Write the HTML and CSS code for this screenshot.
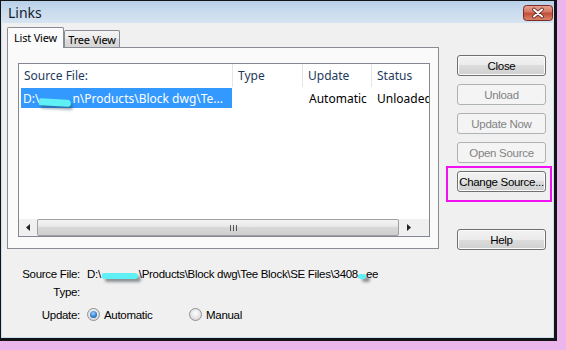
FILE: index.html
```
<!DOCTYPE html>
<html>
<head>
<meta charset="utf-8">
<title>Links</title>
<link rel="stylesheet" href="styles.css">
</head>
<body>
<div class="screen">
  <div class="window">
    <div class="titlebar">
      <span class="title">Links</span>
      <span class="close-x">
        <svg width="30" height="16" viewBox="0 0 30 16">
          <defs>
            <linearGradient id="rg" x1="0" y1="0" x2="0" y2="1">
              <stop offset="0" stop-color="#e8a595"/>
              <stop offset="0.45" stop-color="#d47462"/>
              <stop offset="0.5" stop-color="#c24a36"/>
              <stop offset="1" stop-color="#d98a6e"/>
            </linearGradient>
          </defs>
          <rect x="0.5" y="0.5" width="29" height="15" rx="3" fill="url(#rg)" stroke="#7a2a22"/>
          <path d="M11 4.5 L19 11.5 M19 4.5 L11 11.5" stroke="#5a2018" stroke-width="3.6" stroke-linecap="round"/>
          <path d="M11 4.5 L19 11.5 M19 4.5 L11 11.5" stroke="#ffffff" stroke-width="2" stroke-linecap="round"/>
        </svg>
      </span>
    </div>
    <div class="client">
      <div class="main">
        <div class="left">
          <div class="tabs">
            <div class="tab active">List View</div>
            <div class="tab">Tree View</div>
          </div>
          <div class="panel">
            <div class="listbox">
              <div class="lv-header">
                <div class="col c1">Source File:</div>
                <div class="col c2">Type</div>
                <div class="col c3">Update</div>
                <div class="col c4">Status</div>
              </div>
              <div class="lv-body">
                <div class="row">
                  <div class="cell c1"><span class="sel">D:\<span class="blot"></span>n\Products\Block dwg\Te...</span></div>
                  <div class="cell c2"></div>
                  <div class="cell c3">Automatic</div>
                  <div class="cell c4">Unloaded</div>
                </div>
              </div>
              <div class="hscroll">
                <div class="arrow">
                  <svg width="4" height="7" viewBox="0 0 4 7"><path d="M4 0 L0 3.5 L4 7 Z" fill="#222"/></svg>
                </div>
                <div class="thumb">
                  <svg width="7" height="6" viewBox="0 0 7 6"><path d="M0.5 0 V6 M3.5 0 V6 M6.5 0 V6" stroke="#555" stroke-width="1"/></svg>
                </div>
                <div class="arrow right">
                  <svg width="4" height="7" viewBox="0 0 4 7"><path d="M0 0 L4 3.5 L0 7 Z" fill="#222"/></svg>
                </div>
              </div>
            </div>
          </div>
        </div>
        <div class="buttons">
          <div class="btn">Close</div>
          <div class="btn disabled">Unload</div>
          <div class="btn disabled">Update Now</div>
          <div class="btn disabled">Open Source</div>
          <div class="btn">Change Source...</div>
          <div class="btn help">Help</div>
        </div>
      </div>
      <div class="props">
        <div class="label">Source File:</div>
        <div class="value">D:\<span class="blot2"></span>\Products\Block dwg\Tee Block\SE Files\3408<span class="blot3"></span>ee</div>
        <div class="label">Type:</div>
        <div class="value"></div>
        <div class="label upd">Update:</div>
        <div class="value upd radios">
          <span class="radio-item auto"><span class="radio checked"></span>Automatic</span>
          <span class="radio-item"><span class="radio"></span>Manual</span>
        </div>
      </div>
    </div>
  </div>
  <div class="highlight"></div>
</div>
</body>
</html>
```
FILE: styles.css
```
* { box-sizing: border-box; }
html, body { margin: 0; padding: 0; }
body { background: #ebb6ec; }

.screen {
  position: relative;
  width: 566px;
  height: 350px;
  background: #ebb6ec;
  overflow: hidden;
}

.window {
  width: 557px;
  height: 341px;
  border-style: solid;
  border-color: #121418;
  border-width: 1px 3px 3px 1px;
  background: #cfdeee;
  display: flex;
  flex-direction: column;
}

.titlebar {
  height: 22px;
  flex: none;
  display: flex;
  align-items: center;
  justify-content: space-between;
  padding: 0 1px 0 7px;
  background: linear-gradient(#b8cfe8, #c9dbee 45%, #d6e3f1);
}
.title {
  font: 14px "Noto Sans", "Open Sans", sans-serif;
  color: #14202e;
  margin-top: 1px;
}
.close-x { display: flex; margin-top: 2px; }

.client {
  flex: 1;
  margin: 0 1px 1px 1px;
  background: #f0f0f0;
  display: flex;
  flex-direction: column;
}

.main {
  display: flex;
  padding: 4px 0 0 5px;
}
.left { width: 432px; display: flex; flex-direction: column; }

.tabs {
  display: flex;
  align-items: flex-end;
  height: 20px;
  position: relative;
  z-index: 1;
}
.tab {
  height: 17px;
  width: 56px;
  border: 1px solid #898c95;
  border-bottom: none;
  border-radius: 2px 2px 0 0;
  background: linear-gradient(#f3f3f3, #ebebeb 50%, #dddddd 50%, #d5d5d5);
  font: 11px "Noto Sans", "Open Sans", sans-serif;
  letter-spacing: -0.2px;
  color: #000;
  display: flex;
  align-items: center;
  justify-content: center;
  padding-top: 1px;
}
.tab.active {
  height: 21px;
  width: 57px;
  margin-bottom: -1px;
  background: #fbfbfb;
  padding-bottom: 2px;
}

.panel {
  height: 202px;
  border: 1px solid #898c95;
  background: #fafafa;
  padding: 15px 0 0 10px;
}

.listbox {
  width: 412px;
  height: 174px;
  border: 1px solid #828790;
  background: #fff;
  display: flex;
  flex-direction: column;
  overflow: hidden;
}

.lv-header {
  height: 23px;
  flex: none;
  display: flex;
  font: 12px "Noto Sans", "Open Sans", sans-serif;
  color: #1e395b;
}
.col {
  padding-left: 5px;
  display: flex;
  align-items: center;
  border-right: 1px solid #e3e5e9;
  flex: none;
  white-space: nowrap;
}
.c1 { width: 214px; }
.c2 { width: 70px; }
.c3 { width: 69px; }
.c4 { width: 70px; border-right: none; }

.lv-body { flex: 1; padding-top: 1px; }
.row {
  display: flex;
  height: 20px;
  font: 12px "Noto Sans", "Open Sans", sans-serif;
  color: #000;
}
.cell {
  flex: none;
  display: flex;
  align-items: center;
  white-space: nowrap;
  overflow: visible;
  padding-left: 5px;
}
.cell.c1 { padding-left: 2px; }
.cell.c2, .cell.c3 { padding-left: 6px; }
.cell.c4 { padding-left: 5px; }
.sel {
  display: flex;
  align-items: center;
  height: 20px;
  width: 211px;
  background: #3399ff;
  color: #fff;
  padding-left: 2px;
}
.blot {
  display: inline-block;
  width: 32px;
  height: 7px;
  margin: 8px 1px 0 0;
  border-radius: 4px 8px 6px 3px;
  background: #5ef0f4;
  box-shadow: 2px 3px 3px rgba(40, 60, 80, 0.45);
  transform: rotate(3deg);
}

.hscroll {
  height: 17px;
  flex: none;
  display: flex;
  background: #ececec;
}
.arrow {
  width: 18px;
  display: flex;
  align-items: center;
  justify-content: center;
  background: #f0f0f0;
}
.arrow.right { width: 30px; justify-content: center; padding-right: 10px; }
.thumb {
  flex: 1;
  border: 1px solid #a0a0a0;
  border-radius: 2px;
  background: linear-gradient(#f4f4f4, #e6e6e6 50%, #d8d8d8 50%, #cfcfcf);
  display: flex;
  align-items: center;
  justify-content: center;
  padding-left: 30px;
  margin: 0;
}

.buttons {
  margin: 28px 0 0 18px;
  display: flex;
  flex-direction: column;
  gap: 8px;
}
.btn {
  width: 89px;
  height: 21px;
  border: 1px solid #707070;
  border-radius: 3px;
  background: linear-gradient(#f2f2f2, #ebebeb 50%, #dddddd 50%, #cfcfcf);
  box-shadow: inset 0 0 0 1px #fbfbfb;
  font: 11.5px "Liberation Sans", Arial, sans-serif;
  letter-spacing: -0.3px;
  color: #000;
  display: flex;
  align-items: center;
  justify-content: center;
}
.btn.disabled {
  border-color: #adb2b5;
  background: #f4f4f4;
  box-shadow: none;
  color: #838383;
}
.btn.help { margin-top: 29px; }

.props {
  margin-top: 15px;
  display: grid;
  grid-template-columns: 78px 1fr;
  grid-auto-rows: 18px;
  column-gap: 7px;
  font: 11.5px "Liberation Sans", Arial, sans-serif;
  letter-spacing: -0.3px;
  color: #000;
}
.label {
  text-align: right;
  display: flex;
  align-items: center;
  justify-content: flex-end;
}
.value { display: flex; align-items: center; white-space: nowrap; }
.upd { margin-top: 9px; }
.blot2 {
  display: inline-block;
  width: 36px;
  height: 6px;
  margin: 4px 1px 0 1px;
  border-radius: 3px 6px 4px 3px;
  background: #5ef0f4;
  box-shadow: 3px 3px 3px rgba(40, 50, 60, 0.5);
}
.blot3 {
  display: inline-block;
  width: 8px;
  height: 5px;
  margin-top: 5px;
  border-radius: 3px;
  background: #5ef0f4;
  box-shadow: 4px 3px 3px rgba(40, 50, 60, 0.5);
}

.radios { gap: 0; }
.radio-item { display: flex; align-items: center; gap: 4px; }
.radio-item.auto { width: 102px; }
.radio {
  width: 13px;
  height: 13px;
  border-radius: 50%;
  border: 1px solid #8f8f8f;
  background: radial-gradient(circle at 50% 40%, #ffffff, #dcdcdc 70%, #c8c8c8);
  display: flex;
  align-items: center;
  justify-content: center;
}
.radio.checked::after {
  content: "";
  width: 7px;
  height: 7px;
  border-radius: 50%;
  background: radial-gradient(circle at 45% 35%, #9fd4ff, #2d78c8 60%, #1a4f8a);
}

.highlight {
  position: absolute;
  left: 446px;
  top: 166px;
  width: 106px;
  height: 36px;
  border: 2px solid #f010f0;
}
```
